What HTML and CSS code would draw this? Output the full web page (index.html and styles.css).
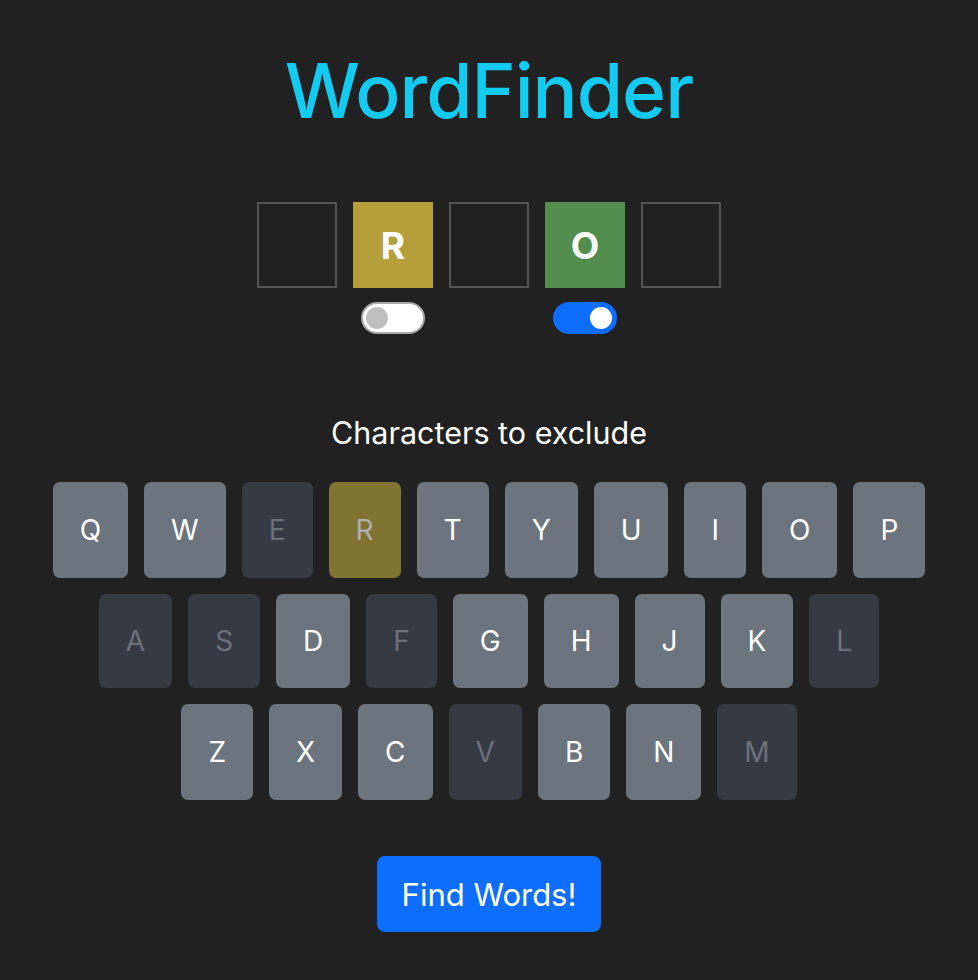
FILE: index.html
```html
<!DOCTYPE html>
<html>
<head>
<meta charset="utf-8">
<link rel="stylesheet" href="styles.css">
</head>
<body>
<main class="app">
  <h1 class="title">WordFinder</h1>
  <div class="tiles">
    <div class="slot"><div class="tile"></div></div>
    <div class="slot"><div class="tile yellow">R</div><span class="switch"><span class="knob"></span></span></div>
    <div class="slot"><div class="tile"></div></div>
    <div class="slot"><div class="tile green">O</div><span class="switch on"><span class="knob"></span></span></div>
    <div class="slot"><div class="tile"></div></div>
  </div>
  <p class="label">Characters to exclude</p>
  <div class="keyboard">
    <div class="row">
      <span class="key">Q</span><span class="key">W</span><span class="key off">E</span><span class="key present">R</span><span class="key">T</span><span class="key">Y</span><span class="key">U</span><span class="key">I</span><span class="key">O</span><span class="key">P</span>
    </div>
    <div class="row">
      <span class="key off">A</span><span class="key off">S</span><span class="key">D</span><span class="key off">F</span><span class="key">G</span><span class="key">H</span><span class="key">J</span><span class="key">K</span><span class="key off">L</span>
    </div>
    <div class="row">
      <span class="key">Z</span><span class="key">X</span><span class="key">C</span><span class="key off">V</span><span class="key">B</span><span class="key">N</span><span class="key off">M</span>
    </div>
  </div>
  <button class="find">Find Words!</button>
</main>
</body>
</html>
```
FILE: styles.css
```css
html, body {
  margin: 0;
  padding: 0;
  background: #212121;
}
body {
  font-family: Inter, "Noto Sans", sans-serif;
  color: #fff;
}
.app {
  display: flex;
  flex-direction: column;
  align-items: center;
  padding-top: 44px;
}
.title {
  margin: 0;
  font-size: 75px;
  font-weight: 500;
  color: #13caf0;
  line-height: 94px;
  letter-spacing: -1px;
}
.tiles {
  display: flex;
  gap: 16px;
  margin-top: 64px;
  height: 132px;
}
.slot {
  display: flex;
  flex-direction: column;
  align-items: center;
  width: 80px;
}
.tile {
  width: 80px;
  height: 86px;
  box-sizing: border-box;
  border: 2px solid #545454;
  display: flex;
  align-items: center;
  justify-content: center;
  font-size: 37px;
  font-weight: 700;
  color: #fff;
}
.tile.yellow { background: #b59f3b; border-color: #b59f3b; }
.tile.green { background: #538d4e; border-color: #538d4e; }
.switch {
  margin-top: 14px;
  width: 64px;
  height: 32px;
  box-sizing: border-box;
  border-radius: 16px;
  background: #fff;
  border: 2px solid #a8a8a8;
  display: flex;
  align-items: center;
  padding: 0 3px;
}
.knob {
  width: 22px;
  height: 22px;
  border-radius: 50%;
  background: #bfbfbf;
}
.switch.on {
  background: #0d6efd;
  border-color: #0d6efd;
  justify-content: flex-end;
}
.switch.on .knob { background: #fff; }
.label {
  margin: 80px 0 0;
  font-size: 30.5px;
  line-height: 38px;
}
.keyboard {
  margin-top: 30px;
  display: flex;
  flex-direction: column;
  gap: 16px;
  align-items: center;
}
.row {
  display: flex;
  gap: 16px;
}
.key {
  height: 96px;
  padding: 0 27px;
  min-width: 6px;
  display: flex;
  align-items: center;
  justify-content: center;
  border-radius: 7px;
  background: #6c757d;
  color: #fff;
  font-size: 28px;
}
.row:nth-child(2) .key { height: 94px; }
.key.off { background: #363a43; color: #6c717b; }
.key.present { background: #817332; color: #b1b1b1; }
.find {
  margin-top: 56px;
  width: 224px;
  height: 76px;
  border: none;
  border-radius: 8px;
  background: #0d6efd;
  color: #fff;
  font-family: Inter, "Noto Sans", sans-serif;
  font-size: 31px;
}
```
